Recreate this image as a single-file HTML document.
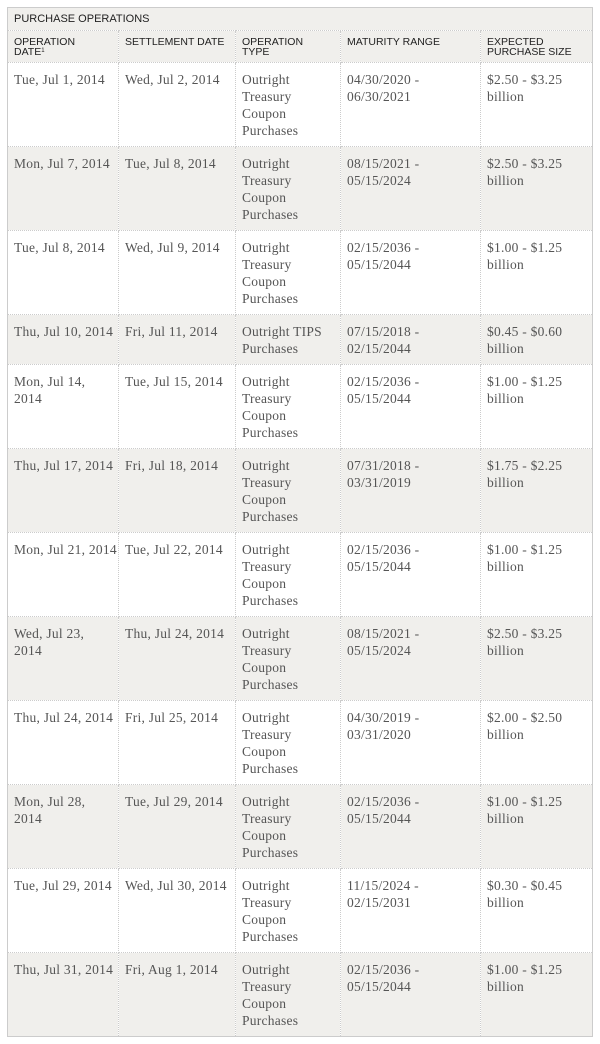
<!DOCTYPE html>
<html><head><meta charset="utf-8"><style>
body{margin:0;background:#fff;}
table{position:absolute;left:7px;top:7px;width:585px;border-collapse:collapse;table-layout:fixed;border:1px solid #ccc;}
td,th{border:1px dotted #ccc;vertical-align:top;text-align:left;padding:0 6px;white-space:nowrap;overflow:hidden;}
.cap th{font:11px "Liberation Sans",sans-serif;color:#222;height:22px;vertical-align:middle;font-weight:normal;background:#f0efec;border-bottom:1px dotted #ccc;}
.hd th{font:10.5px/10px "Liberation Sans",sans-serif;color:#222;font-weight:normal;background:#f0efec;height:24px;padding-top:6px;padding-bottom:1px;}
sup{font-size:6px;vertical-align:top;position:relative;top:-1px}
td{font:13.5px/17px "Liberation Serif",serif;letter-spacing:0.25px;color:#555;padding-top:8px;height:75px;padding-right:0;}
tr.s td{height:41px;}
tbody tr:nth-child(even) td{background:#f0efec;}
tbody tr:nth-child(odd) td{background:#fff;}
</style></head><body>
<table>
<colgroup><col style="width:111px"><col style="width:117px"><col style="width:105px"><col style="width:140px"><col style="width:112px"></colgroup>
<thead>
<tr class="cap"><th colspan="5">PURCHASE OPERATIONS</th></tr>
<tr class="hd"><th>OPERATION<br>DATE<sup>1</sup></th><th>SETTLEMENT DATE</th><th>OPERATION<br>TYPE</th><th>MATURITY RANGE</th><th>EXPECTED<br>PURCHASE SIZE</th></tr>
</thead>
<tbody>
<tr><td>Tue, Jul 1, 2014</td><td>Wed, Jul 2, 2014</td><td>Outright<br>Treasury<br>Coupon<br>Purchases</td><td>04/30/2020 -<br>06/30/2021</td><td>$2.50 - $3.25<br>billion</td></tr>
<tr><td>Mon, Jul 7, 2014</td><td>Tue, Jul 8, 2014</td><td>Outright<br>Treasury<br>Coupon<br>Purchases</td><td>08/15/2021 -<br>05/15/2024</td><td>$2.50 - $3.25<br>billion</td></tr>
<tr><td>Tue, Jul 8, 2014</td><td>Wed, Jul 9, 2014</td><td>Outright<br>Treasury<br>Coupon<br>Purchases</td><td>02/15/2036 -<br>05/15/2044</td><td>$1.00 - $1.25<br>billion</td></tr>
<tr class="s"><td>Thu, Jul 10, 2014</td><td>Fri, Jul 11, 2014</td><td>Outright TIPS<br>Purchases</td><td>07/15/2018 -<br>02/15/2044</td><td>$0.45 - $0.60<br>billion</td></tr>
<tr><td>Mon, Jul 14,<br>2014</td><td>Tue, Jul 15, 2014</td><td>Outright<br>Treasury<br>Coupon<br>Purchases</td><td>02/15/2036 -<br>05/15/2044</td><td>$1.00 - $1.25<br>billion</td></tr>
<tr><td>Thu, Jul 17, 2014</td><td>Fri, Jul 18, 2014</td><td>Outright<br>Treasury<br>Coupon<br>Purchases</td><td>07/31/2018 -<br>03/31/2019</td><td>$1.75 - $2.25<br>billion</td></tr>
<tr><td>Mon, Jul 21, 2014</td><td>Tue, Jul 22, 2014</td><td>Outright<br>Treasury<br>Coupon<br>Purchases</td><td>02/15/2036 -<br>05/15/2044</td><td>$1.00 - $1.25<br>billion</td></tr>
<tr><td>Wed, Jul 23,<br>2014</td><td>Thu, Jul 24, 2014</td><td>Outright<br>Treasury<br>Coupon<br>Purchases</td><td>08/15/2021 -<br>05/15/2024</td><td>$2.50 - $3.25<br>billion</td></tr>
<tr><td>Thu, Jul 24, 2014</td><td>Fri, Jul 25, 2014</td><td>Outright<br>Treasury<br>Coupon<br>Purchases</td><td>04/30/2019 -<br>03/31/2020</td><td>$2.00 - $2.50<br>billion</td></tr>
<tr><td>Mon, Jul 28,<br>2014</td><td>Tue, Jul 29, 2014</td><td>Outright<br>Treasury<br>Coupon<br>Purchases</td><td>02/15/2036 -<br>05/15/2044</td><td>$1.00 - $1.25<br>billion</td></tr>
<tr><td>Tue, Jul 29, 2014</td><td>Wed, Jul 30, 2014</td><td>Outright<br>Treasury<br>Coupon<br>Purchases</td><td>11/15/2024 -<br>02/15/2031</td><td>$0.30 - $0.45<br>billion</td></tr>
<tr><td>Thu, Jul 31, 2014</td><td>Fri, Aug 1, 2014</td><td>Outright<br>Treasury<br>Coupon<br>Purchases</td><td>02/15/2036 -<br>05/15/2044</td><td>$1.00 - $1.25<br>billion</td></tr>
</tbody></table>
</body></html>
